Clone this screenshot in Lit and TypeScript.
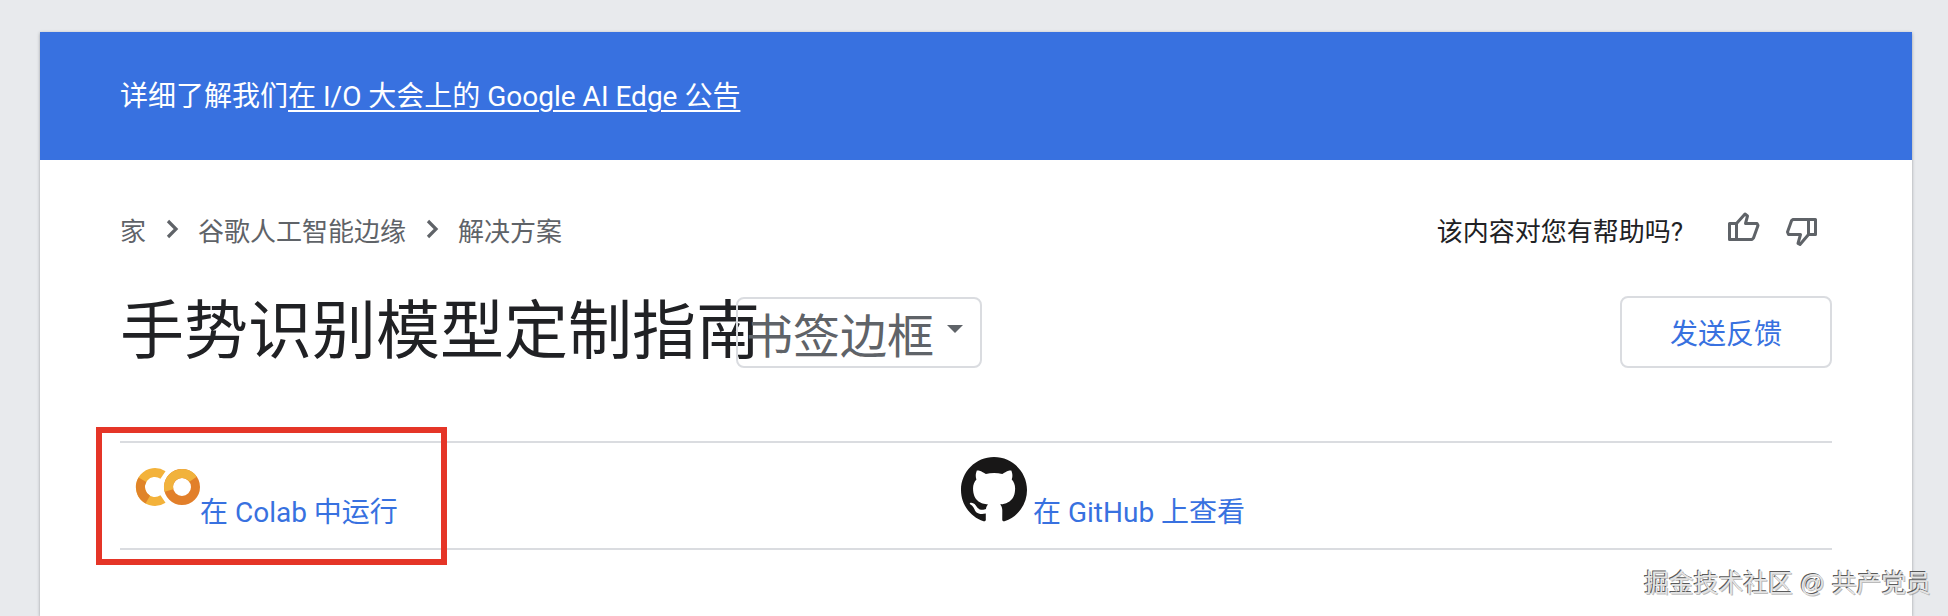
import { LitElement, html, css } from "lit";
import { customElement } from "lit/decorators.js";

@customElement("app-root")
export class AppRoot extends LitElement {
  static styles = css`
    :host {
      display: block;
      width: 1948px;
      height: 616px;
      overflow: hidden;
      position: relative;
      background: #e8eaed;
      font-family: Roboto, "Noto Sans CJK SC", sans-serif;
      color: #202124;
    }
    .page { padding: 32px 36px 0 40px; }
    .card {
      background: #fff;
      height: 584px;
      box-shadow: 0 1px 3px rgba(60, 64, 67, 0.45);
    }
    .banner {
      background: #3871e0;
      height: 128px;
      box-sizing: border-box;
      padding: 0 80px 4px;
      display: flex;
      align-items: center;
      color: #fff;
      font-size: 28px;
    }
    .banner a { color: #fff; text-decoration: underline; text-underline-offset: 4px; }
    .content { padding: 40px 80px 0; }
    .top { display: flex; justify-content: space-between; align-items: center; height: 58px; }
    .crumbs { display: flex; align-items: center; font-size: 26px; color: #5f6368; }
    .crumbs svg { width: 24px; height: 24px; margin: 0 14px; }
    .help { display: flex; align-items: center; font-size: 26px; color: #202124; margin-right: 10px; }
    .thumb { width: 40px; height: 40px; margin-left: 18px; }
    .thumb.first { margin-left: 41px; }
    .title-row { display: flex; align-items: center; margin-top: 38px; height: 72px; }
    h1 { margin: 0; font-size: 64px; font-weight: 400; line-height: 72px; white-space: nowrap; }
    .select {
      margin-left: -24px;
      width: 246px;
      height: 71px;
      box-sizing: border-box;
      border: 2px solid #dadce0;
      border-radius: 8px;
      display: flex;
      align-items: center;
      font-size: 47px;
      color: #5f6368;
      padding-left: 8px;
      white-space: nowrap;
    }
    .caret {
      width: 0; height: 0;
      border-left: 8px solid transparent;
      border-right: 8px solid transparent;
      border-top: 8px solid #5f6368;
      margin-left: 13px;
      margin-bottom: 6px;
    }
    .feedback {
      margin-left: auto;
      width: 212px;
      height: 72px;
      box-sizing: border-box;
      border: 2px solid #dadce0;
      border-radius: 8px;
      background: #fff;
      color: #3871e0;
      font-size: 28px;
      display: flex;
      align-items: center;
      justify-content: center;
    }
    .links {
      margin-top: 73px;
      height: 109px;
      box-sizing: border-box;
      border-top: 2px solid #dadce0;
      border-bottom: 2px solid #dadce0;
      display: grid;
      grid-template-columns: 841px 1fr;
      font-size: 28px;
    }
    .links a { color: #3871e0; text-decoration: none; }
    .cell { display: flex; align-items: flex-end; padding-bottom: 18px; white-space: nowrap; }
    .colab { padding-left: 15px; }
    .colab svg { width: 65px; height: 42px; margin-bottom: 22px; flex: none; overflow: visible; }
    .gh svg { width: 66px; height: 66px; margin-bottom: 7px; margin-right: 6px; flex: none; }
    .mark {
      position: absolute;
      left: 96px;
      top: 427px;
      width: 351px;
      height: 138px;
      box-sizing: border-box;
      border: 6px solid #e53527;
    }
    .wm {
      position: absolute;
      left: 1644px;
      top: 568px;
      font-size: 24.8px;
      line-height: 32px;
      font-family: "Liberation Sans", "Noto Sans CJK SC", sans-serif;
      color: #e4e4e4;
      white-space: nowrap;
      text-shadow: -1px -1px 0 rgba(60,60,60,.85), 1px 1px 0 rgba(120,120,120,.5);
    }
  `;

  render() {
    return html`
      <div class="page">
        <div class="card">
          <div class="banner">
            <span>详细了解我们<a>在 I/O 大会上的 Google AI Edge 公告</a></span>
          </div>
          <div class="content">
            <div class="top">
              <div class="crumbs">
                <span>家</span>${this.chev()}<span>谷歌人工智能边缘</span>${this.chev()}<span>解决方案</span>
              </div>
              <div class="help">
                <span>该内容对您有帮助吗?</span>
                <svg class="thumb first" viewBox="0 0 40 40" fill="none" stroke="#5f6368" stroke-width="3" stroke-linejoin="round">
                  <path d="M5.5 14.5h7v16h-7z"/>
                  <path d="M12.5 14.5L21 5l2.5 2-2 7.5H33l1 2-4.5 12.5-1.5 1.5H12.5"/>
                </svg>
                <svg class="thumb" viewBox="0 0 40 40" fill="none" stroke="#5f6368" stroke-width="3" stroke-linejoin="round">
                  <path d="M26.5 10.5h7v15h-7z"/>
                  <path d="M26.5 10.5H11l-1.5 1.2L5.5 23l1 2.5h12L16 34.5l2 1 8.5-10"/>
                </svg>
              </div>
            </div>
            <div class="title-row">
              <h1>手势识别模型定制指南</h1>
              <div class="select"><span>书签边框</span><span class="caret"></span></div>
              <div class="feedback">发送反馈</div>
            </div>
            <div class="links">
              <div class="cell colab">
                <svg viewBox="0 0 65 42" fill="none" stroke-width="9">
                  <path d="M28 9a14.5 14.5 0 1 0 0 24" stroke="#f3b23a"/>
                  <path d="M7.4 13.75a14.5 14.5 0 0 0 5.35 19.85" stroke="#e08429"/>
                  <circle cx="47" cy="21" r="18.4" stroke="#fff" stroke-width="1"/>
                  <circle cx="47" cy="21" r="13.5" stroke="#e27f2a"/>
                  <path d="M33.96 24.5a13.5 13.5 0 0 1 24.1 -11.24" stroke="#f1b23c"/>
                </svg>
                <a>在 Colab 中运行</a>
              </div>
              <div class="cell gh">
                <svg viewBox="0 0 16 16" fill="#181717">
                  <path d="M8 0C3.58 0 0 3.58 0 8c0 3.54 2.29 6.53 5.47 7.59.4.07.55-.17.55-.38 0-.19-.01-.82-.01-1.49-2.01.37-2.53-.49-2.69-.94-.09-.23-.48-.94-.82-1.13-.28-.15-.68-.52-.01-.53.63-.01 1.08.58 1.23.82.72 1.21 1.87.87 2.33.66.07-.52.28-.87.51-1.07-1.78-.2-3.64-.89-3.64-3.95 0-.87.31-1.59.82-2.15-.08-.2-.36-1.02.08-2.12 0 0 .67-.21 2.2.82.64-.18 1.32-.27 2-.27s1.36.09 2 .27c1.53-1.04 2.2-.82 2.2-.82.44 1.1.16 1.92.08 2.12.51.56.82 1.27.82 2.15 0 3.07-1.87 3.75-3.65 3.95.29.25.54.73.54 1.48 0 1.07-.01 1.93-.01 2.2 0 .21.15.46.55.38A8.01 8.01 0 0 0 16 8c0-4.42-3.58-8-8-8z"/>
                </svg>
                <a>在 GitHub 上查看</a>
              </div>
            </div>
          </div>
        </div>
      </div>
      <div class="mark"></div>
      <div class="wm">掘金技术社区 @ 共产党员</div>
    `;
  }

  chev() {
    return html`<svg viewBox="0 0 24 24" fill="none" stroke="#5f6368" stroke-width="3.2"><path d="M8 4l8 8-8 8"/></svg>`;
  }
}
